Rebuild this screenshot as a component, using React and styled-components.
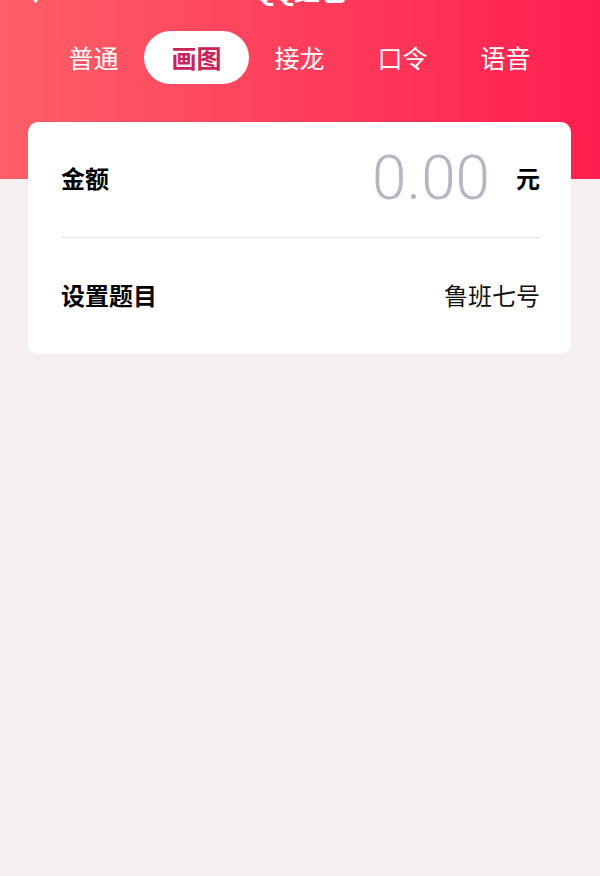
import styled, { createGlobalStyle } from 'styled-components';

const GlobalStyle = createGlobalStyle`
  html, body {
    margin: 0;
    padding: 0;
    background: #f5eff0;
  }
  body {
    font-family: 'Noto Sans CJK SC', 'Noto Sans', sans-serif;
  }
`;

const Page = styled.div`
  min-height: 876px;
  overflow: hidden;
  background:
    linear-gradient(90deg, #fe6067 0%, #fe3e5c 50%, #fe1f4f 100%) top / 100% 179px no-repeat,
    #f5eff0;
`;

const NavBar = styled.div`
  display: grid;
  grid-template-columns: 60px 1fr 60px;
  align-items: center;
  height: 44px;
  margin-top: -32px;
  padding: 0 0 0 24px;
  color: #fff;
`;

const Title = styled.div`
  text-align: center;
  font-size: 26px;
  font-weight: 700;
  line-height: 44px;
  margin-right: 24px;
`;

const Tabs = styled.div`
  display: grid;
  grid-template-columns: repeat(5, 103px);
  padding: 0 42px;
  margin-top: 19px;
`;

const Tab = styled.div`
  height: 53px;
  margin: 0 -1px;
  display: flex;
  align-items: center;
  justify-content: center;
  border-radius: 27px;
  font-size: 25px;
  font-weight: ${(p) => (p.active ? 700 : 400)};
  color: ${(p) => (p.active ? '#c92459' : '#fff')};
  background: ${(p) => (p.active ? '#fff' : 'transparent')};
  padding-bottom: 2px;
  box-sizing: border-box;
`;

const Card = styled.div`
  margin: 38px 29px 0 28px;
  background: #fff;
  border-radius: 10px;
  padding: 0 31px 0 33px;
`;

const Row = styled.div`
  display: flex;
  align-items: center;
  justify-content: space-between;
  height: ${(p) => p.h}px;
  box-sizing: border-box;
  padding-bottom: 4px;
  border-bottom: ${(p) => (p.line ? '1px solid #e3e3e3' : 'none')};
`;

const Label = styled.div`
  font-size: 24px;
  font-weight: 700;
  color: #000;
`;

const Amount = styled.div`
  display: flex;
  align-items: center;
  gap: 26px;
`;

const AmountValue = styled.span`
  font-family: Roboto, 'Liberation Sans', sans-serif;
  font-size: 62px;
  font-weight: 300;
  color: #b4b6c1;
  line-height: 1;
`;

const Unit = styled.span`
  font-size: 24px;
  font-weight: 700;
  color: #000;
`;

const Value = styled.div`
  font-size: 24px;
  color: #111;
`;

const tabs = ['普通', '画图', '接龙', '口令', '语音'];

export default function App() {
  return (
    <Page>
      <GlobalStyle />
      <NavBar>
        <svg width="14" height="26" viewBox="0 0 14 26">
          <path d="M12 2 L3 13 L12 24" stroke="#fff" strokeWidth="3" fill="none" strokeLinecap="round" strokeLinejoin="round" />
        </svg>
        <Title>QQ红包</Title>
        <span />
      </NavBar>
      <Tabs>
        {tabs.map((t) => (
          <Tab key={t} active={t === '画图'}>
            {t}
          </Tab>
        ))}
      </Tabs>
      <Card>
        <Row h={116} line>
          <Label>金额</Label>
          <Amount>
            <AmountValue>0.00</AmountValue>
            <Unit>元</Unit>
          </Amount>
        </Row>
        <Row h={116}>
          <Label>设置题目</Label>
          <Value>鲁班七号</Value>
        </Row>
      </Card>
    </Page>
  );
}
